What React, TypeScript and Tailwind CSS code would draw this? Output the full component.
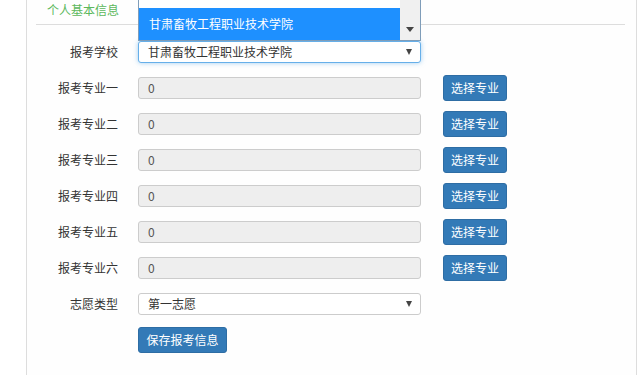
import React from "react";

const font = { fontFamily: '"Noto Sans CJK SC", "Noto Sans", sans-serif' };

const majors = ["报考专业一", "报考专业二", "报考专业三", "报考专业四", "报考专业五", "报考专业六"];

function Arrow() {
  return (
    <span className="absolute right-[8px] top-1/2 -translate-y-1/2 w-0 h-0 border-l-[3.5px] border-r-[3.5px] border-t-[6px] border-l-transparent border-r-transparent border-t-[#444]" />
  );
}

function Row({ label, children }: { label: string; children: React.ReactNode }) {
  return (
    <div className="flex items-center h-[26px]">
      <div className="w-[91px] text-right text-[12px] text-[#333]">{label}</div>
      <div className="ml-[20px] flex items-center">{children}</div>
    </div>
  );
}

export default function App() {
  return (
    <div className="w-[642px] h-[375px] bg-white overflow-hidden relative" style={font}>
      <div className="ml-[26px] w-[611px] h-full border-l border-r border-[#ddd] bg-[#fefefe]">
        <div className="ml-[9px] mr-[11px] h-[25px] border-b border-[#ddd] pl-[11px] pt-[1px] text-[12px] leading-[18px] text-[#5cb85c]">
          个人基本信息
        </div>

        <div className="mt-[14px] flex flex-col gap-[10px]">
          <Row label="报考学校">
            <div className="relative w-[283px] h-[22px] border border-[#66afe9] rounded-[3px] bg-white shadow-[0_0_5px_rgba(102,175,233,0.6)] pl-[9px] text-[12px] leading-[20px] text-[#333]">
              甘肃畜牧工程职业技术学院
              <Arrow />
            </div>
          </Row>

          {majors.map((m) => (
            <Row key={m} label={m}>
              <div className="w-[283px] h-[22px] border border-[#ccc] rounded-[3px] bg-[#eee] pl-[9px] text-[12px] leading-[20px] text-[#555]">
                0
              </div>
              <button className="ml-[22px] w-[64px] h-[26px] rounded-[3px] bg-[#337ab7] border border-[#2e6da4] text-white text-[12px] leading-[24px]">
                选择专业
              </button>
            </Row>
          ))}

          <Row label="志愿类型">
            <div className="relative w-[283px] h-[22px] border border-[#ccc] rounded-[3px] bg-white pl-[9px] text-[12px] leading-[20px] text-[#333]">
              第一志愿
              <Arrow />
            </div>
          </Row>

          <Row label="">
            <button className="w-[89px] h-[26px] rounded-[3px] bg-[#337ab7] border border-[#2e6da4] text-white text-[12px] leading-[24px]">
              保存报考信息
            </button>
          </Row>
        </div>
      </div>

      <div className="absolute left-[138px] top-0 w-[283px] h-[41px] bg-white border-l border-r border-b border-[#7f9db9] flex">
        <div className="flex-1 flex flex-col">
          <div className="h-[8px]" />
          <div className="h-[32px] bg-[#1e90ff] text-white text-[12px] leading-[32px] pl-[10px]">
            甘肃畜牧工程职业技术学院
          </div>
        </div>
        <div className="w-[20px] bg-[#f0f0f0] relative">
          <span className="absolute left-[6px] top-[27px] w-0 h-0 border-l-[4px] border-r-[4px] border-t-[5px] border-l-transparent border-r-transparent border-t-[#444]" />
        </div>
      </div>
    </div>
  );
}
